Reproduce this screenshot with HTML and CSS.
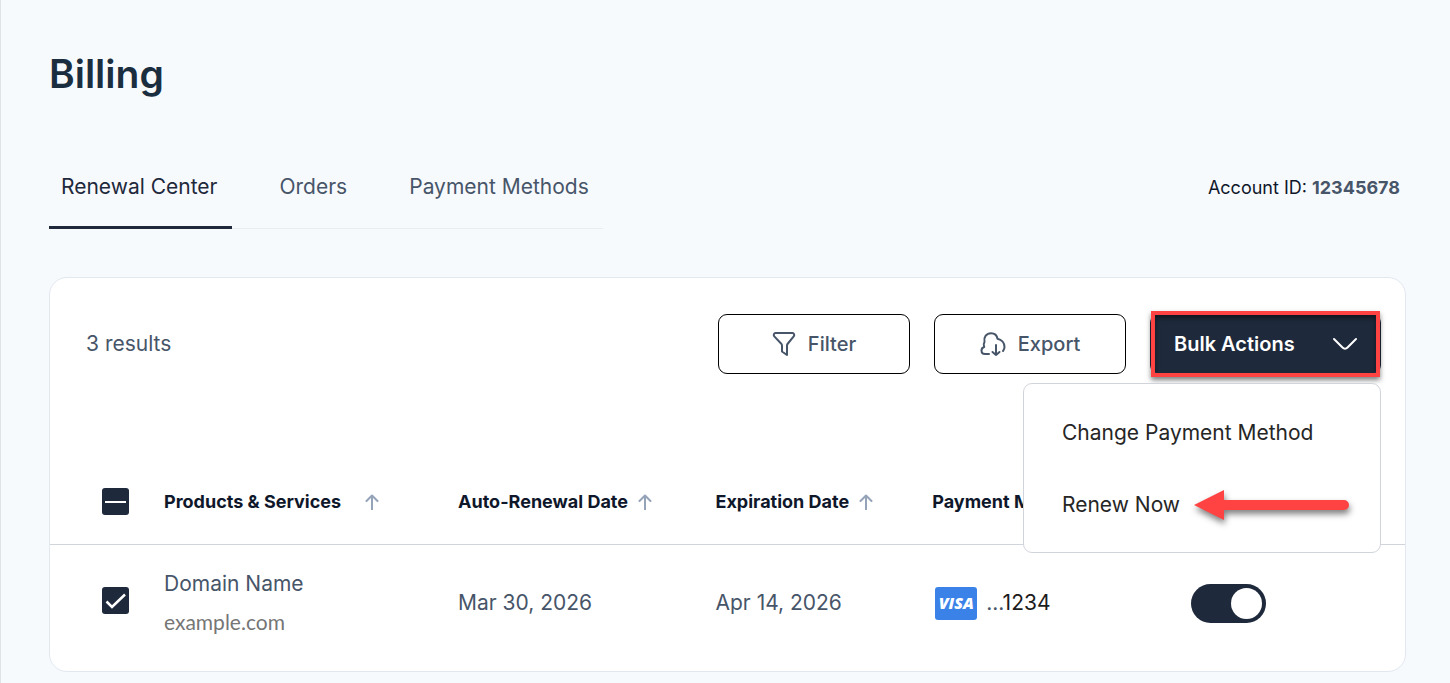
FILE: index.html
```
<!DOCTYPE html>
<html lang="en">
<head>
  <meta charset="UTF-8">
  <meta name="viewport" content="width=device-width, initial-scale=1">
  <title>Billing</title>
  <link rel="stylesheet" href="styles.css">
</head>
<body>
  <main class="page">
    <h1>Billing</h1>

    <div class="subheader">
      <nav class="tabs">
        <a href="#renewal" class="tab active">Renewal Center</a>
        <a href="#orders" class="tab">Orders</a>
        <a href="#payment" class="tab">Payment Methods</a>
      </nav>
      <div class="account">Account ID: <strong>12345678</strong></div>
    </div>

    <section class="card">
      <div class="toolbar">
        <span class="results">3 results</span>
        <button type="button" class="btn">
          <svg width="24" height="26" viewBox="0 0 24 26" fill="none" stroke="currentColor" stroke-width="2" stroke-linejoin="round">
            <path d="M3.5 2h17c1.6 0 2.3 2.1 1.2 3.400l-6.200 7.600c-.4.500-.5.900-.5 1.500v9.500l-5-3.500v-6c0-.6-.1-1-.5-1.500L2.300 5.400C1.200 4.100 1.900 2 3.500 2z"/>
          </svg>
          Filter
        </button>
        <button type="button" class="btn">
          <svg width="26" height="26" viewBox="0 0 26 26" fill="none" stroke="currentColor" stroke-width="2" stroke-linecap="round" stroke-linejoin="round">
            <path d="M9 23H5C2.800 23 1.500 21.500 1.500 19.500c0-1.700 1-3 2.700-3.500C3.400 14.200 3.500 12.500 4.500 11 3.500 6 6.500 2.200 11 2.200c3.500 0 6 2.300 6.500 5.600 4.200.800 7 4.200 7 8.200 0 1.500-.5 2.800-1.500 4"/>
            <path d="M16 14v10M12.500 21l3.500 3 3.500-3"/>
          </svg>
          Export
        </button>
        <div class="bulk">
          <button type="button" class="btn btn-dark" aria-expanded="true">
            Bulk Actions
            <svg width="26" height="14" viewBox="0 0 26 14" fill="none" stroke="currentColor" stroke-width="2" stroke-linecap="round">
              <path d="M2 2l8.500 8.500c1.500 1.500 3.500 1.500 5 0L24 2"/>
            </svg>
          </button>
          <div class="highlight"></div>
          <div class="menu">
            <button type="button" class="menu-item">Change Payment Method</button>
            <button type="button" class="menu-item">
              Renew Now
              <svg class="pointer" width="156" height="30" viewBox="0 0 156 30" fill="#ff4343">
                <path d="M0 15L30 0v10h120a5 5 0 0 1 0 10H30v10z"/>
              </svg>
            </button>
          </div>
        </div>
      </div>

      <table>
        <thead>
          <tr>
            <th class="col-check"><input type="checkbox" class="check check-some" aria-label="Select all"></th>
            <th class="col-product"><button type="button" class="sort sort-wide">Products &amp; Services
              <svg width="14" height="16" viewBox="0 0 14 16"><path d="M7 15.500V2M1.500 7L7 1.500 12.500 7"/></svg></button></th>
            <th class="col-renewal"><button type="button" class="sort">Auto-Renewal Date
              <svg width="14" height="16" viewBox="0 0 14 16"><path d="M7 15.500V2M1.500 7L7 1.500 12.500 7"/></svg></button></th>
            <th class="col-expiry"><button type="button" class="sort">Expiration Date
              <svg width="14" height="16" viewBox="0 0 14 16"><path d="M7 15.500V2M1.500 7L7 1.500 12.500 7"/></svg></button></th>
            <th class="col-payment">Payment Method</th>
            <th></th>
          </tr>
        </thead>
        <tbody>
          <tr>
            <td class="col-check"><input type="checkbox" class="check" aria-label="Select example.com" checked></td>
            <td>
              <div>Domain Name</div>
              <div class="domain">example.com</div>
            </td>
            <td>Mar 30, 2026</td>
            <td>Apr 14, 2026</td>
            <td><div class="payment"><span class="visa">VISA</span><span>...<span class="digits">1234</span></span></div></td>
            <td><input type="checkbox" role="switch" class="toggle" aria-label="Auto-renew" checked></td>
          </tr>
        </tbody>
      </table>
    </section>
  </main>
</body>
</html>
```
FILE: styles.css
```
:root {
  --navy: #1e293b;
  --ink: #0f172a;
  --slate: #475569;
  --line: #d1d5db;
  --red: #ff4343;
}
* { box-sizing: border-box; }
body {
  margin: 0;
  background: #f7fafd;
  color: var(--slate);
  font-family: Inter, sans-serif;
  font-size: 21px;
  line-height: 28px;
}
button { font: inherit; color: inherit; cursor: pointer; }
svg { flex-shrink: 0; }

.page {
  min-height: 100vh;
  padding: 50px 44px 11px 48px;
  border-left: 1px solid #dfe3e6;
}
h1 { margin: 0 0 51px; color: #1a2e3f; font-size: 39px; line-height: 48px; font-weight: 600; }

/* Tabs */
.subheader { display: flex; justify-content: space-between; align-items: flex-start; margin-bottom: 48px; }
.tabs { display: flex; gap: 36px; box-shadow: inset 0 -1px #e8edf1; }
.tab { padding: 24px 14px 25px 12px; border-bottom: 3px solid transparent; color: var(--slate); text-decoration: none; }
.tab.active { color: var(--navy); border-color: var(--navy); }
.account { padding: 25px 6px 0 0; color: var(--ink); font-size: 18px; }
.account strong { color: var(--slate); font-weight: 700; }

.card { background: #fff; border: 1px solid #e2e8f0; border-radius: 18px; }

/* Toolbar */
.toolbar { display: flex; align-items: center; gap: 24px; padding: 36px 24px 86px 36px; }
.results { margin-right: auto; }
.btn {
  display: flex;
  align-items: center;
  justify-content: center;
  gap: 12px;
  width: 192px;
  height: 60px;
  background: #fff;
  border: 1px solid #000;
  border-radius: 9px;
  font-size: 20px;
  font-weight: 500;
}
.bulk { position: relative; }
.btn-dark {
  justify-content: space-between;
  width: 231px;
  padding: 0 22px 0 23px;
  background: var(--navy);
  border-color: var(--navy);
  color: #fff;
  font-weight: 600;
}
.highlight {
  position: absolute;
  inset: -3px 1px;
  border: 4px solid var(--red);
  box-shadow: 0 3px 5px rgba(0,0,0,.5), inset 0 3px 5px rgba(0,0,0,.5);
  pointer-events: none;
}
.menu {
  position: absolute;
  top: 69px;
  right: 0;
  z-index: 1;
  width: 358px;
  padding: 13px 0 11px;
  background: #fff;
  border: 1px solid var(--line);
  border-radius: 9px;
}
.menu-item {
  display: flex;
  align-items: center;
  gap: 14px;
  width: 100%;
  height: 72px;
  padding: 0 0 0 38px;
  background: none;
  border: 0;
  color: #262626;
}
.pointer { overflow: visible; filter: drop-shadow(1px 4px 3px rgba(0,0,0,.5)); }

/* Table */
table { width: 100%; table-layout: fixed; border-collapse: collapse; }
th { height: 84px; padding: 0; border-bottom: 1px solid var(--line); color: var(--ink); font-size: 18px; font-weight: 700; text-align: left; white-space: nowrap; }
td { height: 127px; padding: 0 0 9px; }
.col-check { width: 114px; padding-left: 52px; }
td.col-check { padding-bottom: 14px; }
.col-product { width: 21.7%; }
.col-renewal { width: 19%; }
.col-expiry { width: 16%; }
.col-payment { width: 19.1%; }
.sort { display: flex; align-items: center; gap: 10px; padding: 0; background: none; border: 0; }
.sort-wide { gap: 24px; }
.sort svg { fill: none; stroke: #94a3b8; stroke-width: 2; stroke-linecap: round; stroke-linejoin: round; }
.domain { margin-top: 10px; color: #767676; font-family: Lato, sans-serif; }

.check {
  display: block;
  width: 27px;
  height: 27px;
  margin: 0;
  appearance: none;
  background: var(--navy) url("data:image/svg+xml,%3Csvg xmlns='http://www.w3.org/2000/svg' viewBox='0 0 27 27'%3E%3Cpath d='M4.500 14.500l5.500 5.500L23 7.500' fill='none' stroke='white' stroke-width='2.500'/%3E%3C/svg%3E");
  border-radius: 3px;
}
.check-some {
  background-image: url("data:image/svg+xml,%3Csvg xmlns='http://www.w3.org/2000/svg' viewBox='0 0 27 27'%3E%3Cpath d='M3 14h21' stroke='white' stroke-width='2'/%3E%3C/svg%3E");
}
.payment { display: flex; align-items: center; gap: 9px; padding-left: 3px; }
.visa {
  width: 42px;
  height: 33px;
  background: #3b82e8;
  border-radius: 3px;
  color: #fff;
  font: italic 800 16px/33px "Open Sans", sans-serif;
  text-align: center;
}
.digits { color: #1c1c1c; }
.toggle {
  display: flex;
  justify-content: flex-end;
  width: 75px;
  height: 39px;
  margin: 0;
  padding: 4px;
  appearance: none;
  background: var(--navy);
  border-radius: 20px;
}
.toggle::before { content: ""; width: 31px; height: 31px; background: #fff; border-radius: 50%; }
```
